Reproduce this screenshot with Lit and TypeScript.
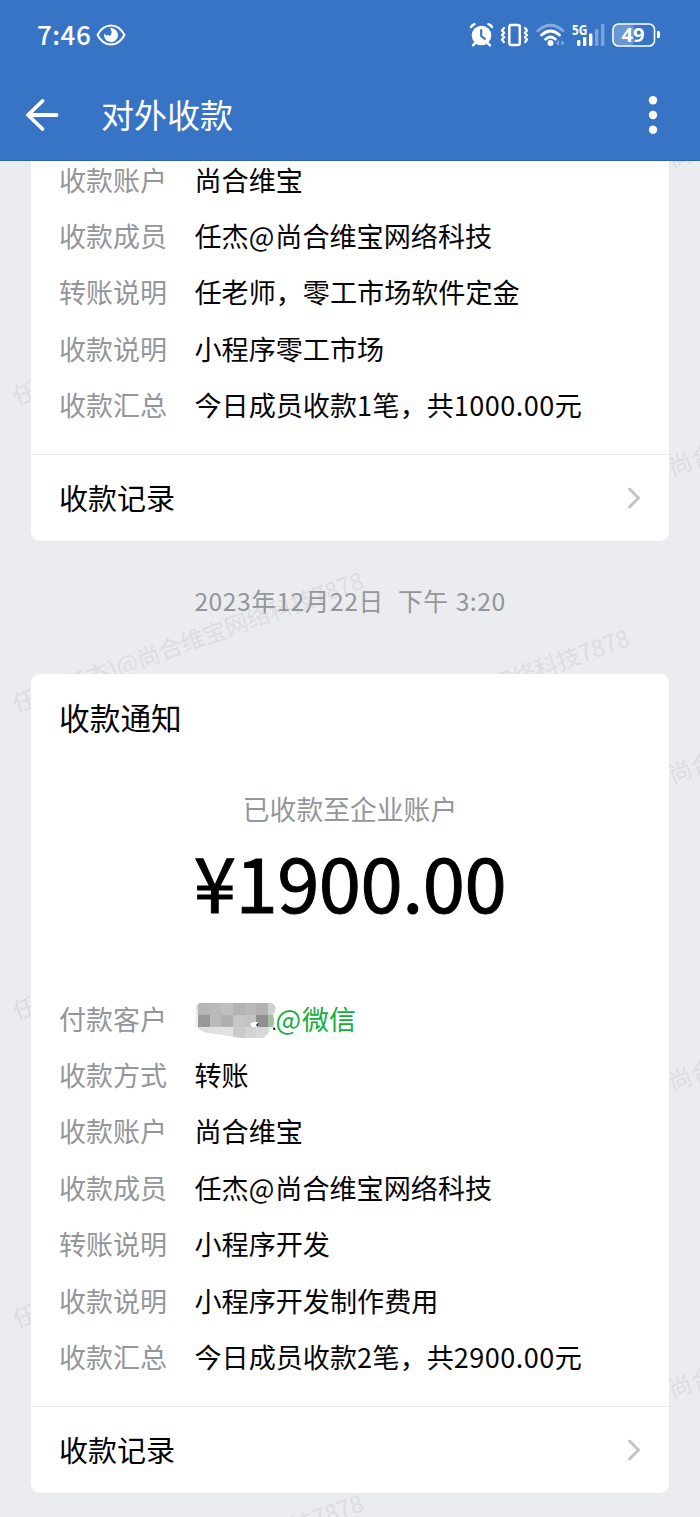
import { LitElement, html, svg, css } from "lit";
import { customElement, property } from "lit/decorators.js";

const FONT = css`"Noto Sans CJK SC", "Noto Sans", sans-serif`;

type Row = { label: string; value: string; masked?: boolean };

const FIRST: Row[] = [
  { label: "收款账户", value: "尚合维宝" },
  { label: "收款成员", value: "任杰@尚合维宝网络科技" },
  { label: "转账说明", value: "任老师，零工市场软件定金" },
  { label: "收款说明", value: "小程序零工市场" },
  { label: "收款汇总", value: "今日成员收款1笔，共1000.00元" },
];

const SECOND: Row[] = [
  { label: "付款客户", value: "@微信", masked: true },
  { label: "收款方式", value: "转账" },
  { label: "收款账户", value: "尚合维宝" },
  { label: "收款成员", value: "任杰@尚合维宝网络科技" },
  { label: "转账说明", value: "小程序开发" },
  { label: "收款说明", value: "小程序开发制作费用" },
  { label: "收款汇总", value: "今日成员收款2笔，共2900.00元" },
];

/* Digits and the at sign are set slightly looser than the surrounding ideographs. */
const withDigits = (text: string) =>
  text
    .split(/([\d.]+|@)/)
    .filter(Boolean)
    .map((part) => (/^[\d.]+$/.test(part) ? html`<span class="num">${part}</span>` : part === "@" ? html`<span class="at">@</span>` : part));

const MOSAIC = [
  ["#dcdcdc", "#b6b6b6", "#b9b9b9", "#bfbfbf", "#b3b3b3", "#b9b9b9", "#b2b2b2", "#cbd3cc"],
  ["#f0f0f0", "#989898", "#bbbbbb", "#b0b0b0", "#c6c6c6", "#c2c2c2", "#909090", "#a3c0a7"],
  ["#eeeeee", "#dcdcdc", "#dfdfdf", "#e2e2e2", "#cacaca", "#d4d4d4", "#d8d8d8", "#e2e2e2"],
];

@customElement("status-bar")
class StatusBar extends LitElement {
  static styles = css`
    :host { display: flex; height: 69px; align-items: center; justify-content: space-between; padding: 0 39px 0 37px; color: #fff; box-sizing: border-box; }
    .left { display: flex; align-items: center; gap: 5px; }
    .time { font: 500 26px/34px ${FONT}; letter-spacing: 0.5px; margin-bottom: 2px; }
    .icon { display: block; }
    .n5g { font: 700 13.5px "Noto Sans", sans-serif; }
    .n49 { font: 700 19px "Noto Sans", sans-serif; }
  `;
  render() {
    return html`
      <div class="left">
        <span class="time">7:46</span>
        <svg class="icon" width="30" height="22" viewBox="0 0 30 22" fill="none">
          <path d="M1.5 11C5 4.500 9.500 1.500 15 1.500S25 4.500 28.500 11C25 17.500 20.500 20.500 15 20.500S5 17.500 1.500 11Z" stroke="#fff" stroke-width="2" stroke-linejoin="round" />
          <path d="M14 4.200A7 7 0 1 1 8.200 9.500Q10.600 12.600 12.400 10.800L13.800 12Q17.600 8.500 14 4.200Z" fill="#fff" />
        </svg>
      </div>
      <svg class="icon" width="192" height="30" viewBox="469 20 192 30" fill="none">
        <g stroke="#fff" stroke-linecap="round">
          <circle cx="481.500" cy="35.500" r="9.800" fill="#fff" stroke="none" />
          <path d="M471 27Q472.300 25 474.500 24.200M492 27Q490.700 25 488.500 24.200M475.500 43L473 45.200M487.500 43L490 45.200" stroke-width="2.500" />
          <path d="M481.200 30V36L484.800 38.800" stroke="#3874c6" stroke-width="2.200" />
          <rect x="509.300" y="25" width="10.500" height="20" rx="2" stroke-width="2.500" />
          <path d="M504 28l-2 2.400 2.200 2.300-2.200 2.300 2.200 2.300-2.200 2.300 1.800 2.400M525 28l2 2.400-2.200 2.300 2.200 2.300-2.200 2.300 2.200 2.300-1.800 2.400" stroke-width="2.200" stroke-linejoin="round" />
          <path d="M538 30.800Q550.500 19.800 563 30.800" stroke-width="2.800" opacity=".4" />
          <path d="M541.500 35Q550.500 27 559.500 35M545.500 39.200Q550.500 34.800 555.500 39.200" stroke-width="2.800" />
          <circle cx="550.500" cy="43" r="3" fill="#fff" stroke="none" />
        </g>
        <path d="M556 43l3-3v6zM564.500 43l-3-3v6z" fill="#fff" opacity=".4" />
        <text class="n5g" x="572" y="34.500" fill="#fff" textLength="15.500" lengthAdjust="spacingAndGlyphs">5G</text>
        <g fill="#fff">
          <rect x="577" y="40" width="3.400" height="6" rx="1.300" /><rect x="583" y="37" width="3.400" height="9" rx="1.300" />
          <rect x="589" y="33.500" width="3.400" height="12.500" rx="1.300" />
          <rect x="595" y="29" width="3.400" height="17" rx="1.300" opacity=".35" /><rect x="601" y="24" width="3.400" height="22" rx="1.300" opacity=".35" />
          <rect x="614" y="25" width="20" height="20" rx="3" opacity=".25" />
          <path d="M657 31h1.500q1.500 0 1.500 1.500v4q0 1.500-1.500 1.500H657z" />
        </g>
        <rect x="613" y="24" width="41.500" height="22" rx="5.500" stroke="#fff" stroke-width="1.600" />
        <text class="n49" x="621.500" y="41.700" fill="#fff" textLength="23" lengthAdjust="spacingAndGlyphs">49</text>
      </svg>
    `;
  }
}

@customElement("receipt-card")
class ReceiptCard extends LitElement {
  @property({ attribute: false }) rows: Row[] = [];
  @property() heading = "";
  @property() amount = "";
  static styles = css`
    :host { display: block; background: #fff; border-radius: 9px; position: relative; font-family: ${FONT}; color: #060608; }
    .title { margin: 0; padding: 20.500px 28px 0; font-size: 30.7px; line-height: 46px; font-weight: 400; }
    .note { margin-top: 45.500px; text-align: center; font-size: 26.8px; line-height: 46px; color: #93969a; }
    .amount { height: 96px; display: flex; justify-content: center; align-items: center; font-size: 76px; line-height: 96px; color: #000; -webkit-text-stroke: 1px #000; margin-bottom: 62.5px; letter-spacing: -0.5px; }
    .row { display: grid; grid-template-columns: 135.500px 1fr; height: 56.4px; align-items: center; padding: 0 28px; font-size: 27px; line-height: 40px; white-space: nowrap; }
    .label { color: #93969a; }
    .value { font-size: 27.1px; }
    .masked { display: flex; align-items: center; color: #17ad3d; }
    .mosaic { display: block; margin-top: 4px; }
    .num { letter-spacing: 0.45px; }
    .at { letter-spacing: 1px; }
    .footer { display: flex; align-items: center; justify-content: space-between; height: 86px; margin-top: 20.6px; padding: 0 28px; border-top: 1px solid #ebebed; font-size: 29px; color: #000; }
    .more { padding-bottom: 1px; }
  `;
  render() {
    return html`
      ${this.heading
        ? html`<h2 class="title">${this.heading}</h2>
            <div class="note">已收款至企业账户</div>
            <div class="amount">${this.amount}</div>`
        : ""}
      ${this.rows.map(
        (r) => html`<div class="row">
          <span class="label">${r.label}</span>
          ${r.masked ? html`<span class="masked">${this.mosaic()}<span>${withDigits(r.value)}</span></span>` : html`<span class="value">${withDigits(r.value)}</span>`}
        </div>`
      )}
      <div class="footer">
        <span class="more">收款记录</span>
        <svg width="14" height="22" viewBox="0 0 14 22" fill="none" stroke="#c4c4c6" stroke-width="3" stroke-linecap="round" stroke-linejoin="round"><path d="M2.500 2L11.500 11L2.500 20" /></svg>
      </div>
    `;
  }
  mosaic() {
    return html`<svg class="mosaic" width="81" height="38" viewBox="0 0 81 38">
      <defs><clipPath id="smudge"><path d="M5 1H76Q82 3 80 9Q77 12 79 17Q80 24 76 26Q74 33 68 36H46Q35 34 20 32Q8 31 4 27Q-3 24 -1 17Q3 13 1 7Q1 2 5 1Z" /></clipPath></defs>
      <g clip-path="url(#smudge)" shape-rendering="crispEdges">
        ${MOSAIC.map((line, y) => line.map((c, x) => svg`<rect x=${Math.round(x * 11.7 - 8.7)} y=${y * 12 + 1} width="12" height="12" fill=${c} />`))}
      </g>
      <path d="M55 22L58 20L63 20L62 25L57 25Z" fill="#fff" />
      <path d="M61 23.500L62.500 21L63.500 22L62.200 24ZM78 25.500h1.500l1 2.500h-2z" fill="#111" />
    </svg>`;
  }
}

@customElement("app-root")
class AppRoot extends LitElement {
  static styles = css`
    :host { display: block; position: relative; width: 700px; height: 1517px; overflow: hidden; background: #ebecf0; font-family: ${FONT}; }
    .header { position: relative; z-index: 1; height: 161px; box-sizing: border-box; background: #3874c6; border-bottom: 1px solid #2c62b0; color: #fff; }
    .bar { display: flex; align-items: center; height: 92px; padding: 0 42px 0 25px; }
    .name { flex: 1; margin: 0 0 3px 42px; font-size: 33px; line-height: 48px; font-weight: 400; }
    .mark { position: absolute; left: 0; top: 0; width: 700px; height: 1517px; }
    .stamp { font: 23.4px ${FONT}; fill: #dcdde1; }
    .feed { padding: 0 31px; }
    .first { border-radius: 0 0 9px 9px; margin-top: -9.6px; }
    .date { position: relative; height: 133px; line-height: 119px; text-align: center; font-size: 24.7px; color: #93969a; white-space: pre; letter-spacing: 0.5px; word-spacing: 1.2px; }
  `;
  render() {
    const stamps = [];
    for (let r = 0; r < 6; r++)
      for (let c = 0; c < 3; c++) {
        const x = 16.5 + c * 266;
        const y = 98 + r * 307.5 + c * 57.5;
        if ((r === 0 && c < 2) || (r === 5 && c > 0)) continue;
        stamps.push(svg`<text class="stamp" transform="translate(${x} ${y}) rotate(-19.8)">任杰(任杰)@尚合维宝网络科技7878</text>`);
      }
    return html`
      <svg class="mark" viewBox="0 0 700 1517">${stamps}</svg>
      <header class="header">
        <status-bar></status-bar>
        <div class="bar">
          <svg width="34" height="34" viewBox="0 0 34 34" fill="none" stroke="#fff" stroke-width="3.800" stroke-linecap="round" stroke-linejoin="round"><path d="M17.500 3L3 17L17.500 31M3 17H31.500" /></svg>
          <h1 class="name">对外收款</h1>
          <svg width="10" height="40" viewBox="0 0 10 40" fill="#fff"><circle cx="5" cy="5.300" r="4.200" /><circle cx="5" cy="20" r="4.200" /><circle cx="5" cy="34.700" r="4.200" /></svg>
        </div>
      </header>
      <main class="feed">
        <receipt-card class="first" .rows=${FIRST}></receipt-card>
        <div class="date">2023年12月22日  下午 3:20</div>
        <receipt-card heading="收款通知" amount="¥1900.00" .rows=${SECOND}></receipt-card>
      </main>
    `;
  }
}
